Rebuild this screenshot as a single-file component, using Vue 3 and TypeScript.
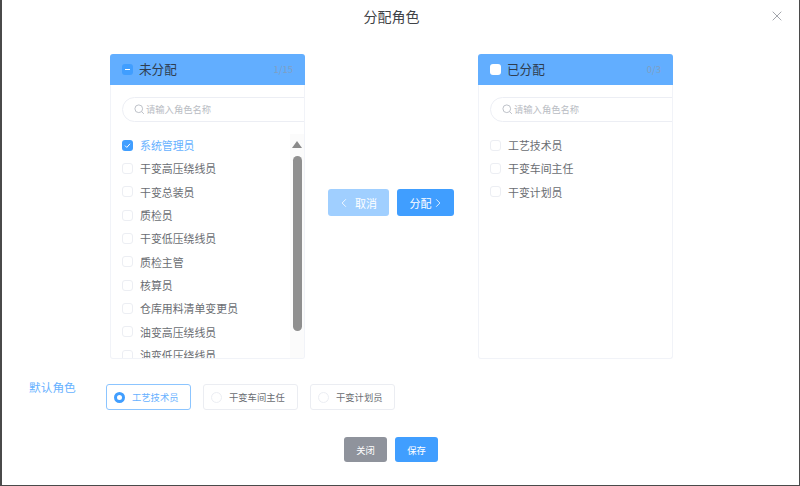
<script setup lang="ts">
const leftItems: string[] = ['干变高压绕线员', '干变总装员', '质检员', '干变低压绕线员', '质检主管', '核算员', '仓库用料清单变更员', '油变高压绕线员', '油变低压绕线员']
const rightItems: string[] = ['工艺技术员', '干变车间主任', '干变计划员']
</script>

<template>
  <div class="dialog">
    <header class="head">
      <h2 class="title">分配角色</h2>
      <svg class="close" viewBox="0 0 10 10" width="10" height="10"><path d="M.7.7l8.6 8.6M9.3.7L.7 9.3" stroke="#a3a6ad" stroke-width="1" fill="none" /></svg>
    </header>

    <section class="transfer">
      <div class="panel">
        <div class="panel-head">
          <span class="cb cb-on"><i class="dash"></i></span>
          <span class="panel-title">未分配</span>
          <span class="count">1/15</span>
        </div>
        <div class="panel-body">
          <div class="search">
            <svg class="mag" viewBox="0 0 12 12" width="11" height="11"><circle cx="5.2" cy="5.2" r="4.2" stroke="#b8bcc4" fill="none" /><path d="M8.3 8.3l2.5 2.5" stroke="#b8bcc4" fill="none" /></svg>
            <span>请输入角色名称</span>
          </div>
          <div class="list">
            <div class="item active">
              <span class="cb cb-on"><svg viewBox="0 0 11 11" width="11" height="11"><path d="M3 5.6l1.8 1.8L8 3.8" stroke="#fff" stroke-width="1" fill="none" /></svg></span>
              <span>系统管理员</span>
            </div>
            <div v-for="name in leftItems" :key="name" class="item">
              <span class="cb"></span>
              <span>{{ name }}</span>
            </div>
            <div class="scrollbar">
              <i class="arrow"></i>
              <i class="thumb"></i>
            </div>
          </div>
        </div>
      </div>

      <div class="actions">
        <button class="btn move disabled" type="button">
          <svg viewBox="0 0 8 12" width="6" height="10"><path d="M6.5 1L1.5 6l5 5" stroke="#fff" fill="none" stroke-width="1.1" /></svg>
          <span>取消</span>
        </button>
        <button class="btn move primary" type="button">
          <span>分配</span>
          <svg viewBox="0 0 8 12" width="6" height="10"><path d="M1.5 1l5 5-5 5" stroke="#fff" fill="none" stroke-width="1.1" /></svg>
        </button>
      </div>

      <div class="panel">
        <div class="panel-head">
          <span class="cb cb-white"></span>
          <span class="panel-title">已分配</span>
          <span class="count">0/3</span>
        </div>
        <div class="panel-body">
          <div class="search">
            <svg class="mag" viewBox="0 0 12 12" width="11" height="11"><circle cx="5.2" cy="5.2" r="4.2" stroke="#b8bcc4" fill="none" /><path d="M8.3 8.3l2.5 2.5" stroke="#b8bcc4" fill="none" /></svg>
            <span>请输入角色名称</span>
          </div>
          <div class="list">
            <div v-for="name in rightItems" :key="name" class="item">
              <span class="cb"></span>
              <span>{{ name }}</span>
            </div>
          </div>
        </div>
      </div>
    </section>

    <section class="default-row">
      <span class="default-label">默认角色</span>
      <div class="radios">
        <div class="radio checked"><i class="dot"></i><span>工艺技术员</span></div>
        <div class="radio wide"><i class="dot"></i><span>干变车间主任</span></div>
        <div class="radio"><i class="dot"></i><span>干变计划员</span></div>
      </div>
    </section>

    <footer class="foot">
      <button class="btn small gray" type="button">关闭</button>
      <button class="btn small primary" type="button">保存</button>
    </footer>
  </div>
</template>

<style>
html, body { margin: 0; background: #fff; }
</style>

<style scoped>
.dialog {
  box-sizing: border-box;
  width: 800px;
  height: 486px;
  display: flex;
  flex-direction: column;
  background: #fff;
  border-left: 2px solid #4a4a4a;
  border-right: 1px solid #4a4a4a;
  border-bottom: 1px solid #4a4a4a;
  font-family: "Noto Sans CJK SC", "Noto Sans", sans-serif;
  color: #606266;
}
.head {
  height: 54px;
  flex: none;
  position: relative;
  display: flex;
  justify-content: center;
}
.title {
  margin: 5px 18px 0 0;
  font-size: 14px;
  line-height: 22px;
  font-weight: 400;
  color: #3f4246;
}
.close { position: absolute; left: 770px; top: 11px; }
.transfer {
  display: flex;
  margin-left: 108px;
  height: 305px;
  flex: none;
}
.panel {
  box-sizing: border-box;
  width: 195px;
  height: 305px;
  display: flex;
  flex-direction: column;
}
.panel-head {
  flex: none;
  height: 31px;
  background: #62aeff;
  border-radius: 3px 3px 0 0;
  display: flex;
  align-items: center;
  padding: 0 12px 2px 12px;
  box-sizing: border-box;
}
.panel-head .cb { margin-top: 2px; }
.panel-body {
  flex: 1;
  min-height: 0;
  border: 1px solid #f1f3f8;
  border-top: 0;
  border-radius: 0 0 3px 3px;
  overflow: hidden;
  display: flex;
  flex-direction: column;
}
.panel-title { margin-left: 6px; font-size: 12.6px; color: #2f3d4f; flex: 1; }
.count { font-size: 9.5px; color: #7f9fc4; }
.cb {
  box-sizing: border-box;
  width: 11px;
  height: 11px;
  flex: none;
  border: 1px solid #eceef3;
  border-radius: 3px;
  background: #fff;
  display: flex;
  align-items: center;
  justify-content: center;
}
.cb-on { background: #409eff; border: 0; }
.cb-white { border: 0; }
.dash { width: 5px; height: 1px; background: #fff; display: block; }
.search {
  flex: none;
  box-sizing: border-box;
  width: 210px;
  height: 25px;
  margin: 12px 0 0 11px;
  border: 1px solid #eceef4;
  border-radius: 13px;
  display: flex;
  align-items: center;
  padding: 0 0 2px 11px;
  gap: 1px;
  font-size: 9.3px;
  color: #b9bcc3;
}
.mag { margin-top: 2px; }
.list {
  position: relative;
  flex: 1;
  min-height: 0;
  margin-top: 11.5px;
  overflow: hidden;
}
.item {
  height: 23.33px;
  display: flex;
  align-items: center;
  gap: 7px;
  padding-left: 11px;
  font-size: 10.9px;
  color: #6a6d72;
  white-space: nowrap;
}
.active { color: #66b1ff; }
.scrollbar {
  position: absolute;
  right: 0;
  top: 0;
  bottom: 0;
  width: 14px;
  background: #fbfbfb;
  display: flex;
  flex-direction: column;
  align-items: center;
}
.arrow {
  width: 0;
  height: 0;
  margin-top: 7px;
  border-left: 5px solid transparent;
  border-right: 5px solid transparent;
  border-bottom: 7px solid #8a8a8a;
}
.thumb {
  display: block;
  width: 9px;
  height: 175px;
  margin-top: 8px;
  border-radius: 5px;
  background: #8f8f8f;
}
.actions {
  width: 173px;
  flex: none;
  display: flex;
  justify-content: center;
  align-items: center;
  gap: 8px;
  padding: 0 2px 8px 0;
  box-sizing: border-box;
}
.btn {
  box-sizing: border-box;
  border: 0;
  border-radius: 3px;
  color: #fff;
  font-family: inherit;
  padding: 0;
  display: flex;
  align-items: center;
  justify-content: center;
}
.move { height: 27px; font-size: 11px; gap: 8px; }
.move.disabled { width: 61px; background: #a0cfff; padding-left: 2px; }
.move.primary { width: 57px; gap: 3px; }
.primary { background: #409eff; }
.gray { background: #8f939c; }
.default-row {
  display: flex;
  margin-top: 25px;
  flex: none;
}
.default-label {
  margin-left: 27px;
  width: 77px;
  font-size: 11.7px;
  line-height: 17px;
  color: #66b1ff;
  margin-top: -6px;
}
.radios { display: flex; gap: 12px; }
.radio {
  box-sizing: border-box;
  width: 85px;
  height: 26px;
  border: 1px solid #ebedf2;
  border-radius: 3px;
  display: flex;
  align-items: center;
  padding-left: 7px;
  gap: 7px;
  font-size: 9.3px;
  color: #6a6d72;
}
.radio.wide { width: 95px; }
.dot {
  box-sizing: border-box;
  display: block;
  width: 11px;
  height: 11px;
  border: 1px solid #eceef3;
  border-radius: 50%;
  background: #fff;
}
.checked { border-color: #8cc5ff; color: #66b1ff; }
.checked .dot { border: 3.5px solid #409eff; }
.foot {
  display: flex;
  gap: 8px;
  margin: 27px 0 0 342px;
}
.small { width: 43px; height: 25px; font-size: 9.3px; }
</style>
